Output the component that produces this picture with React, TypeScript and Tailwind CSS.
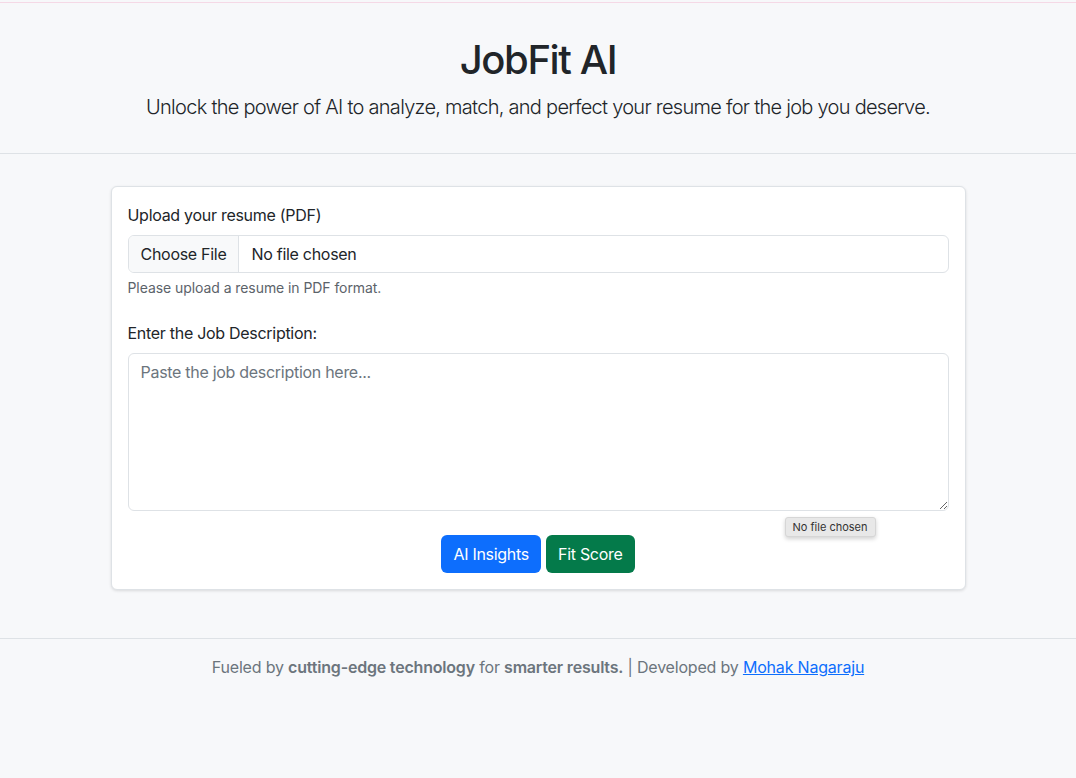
export default function App() {
  return (
    <div
      className="min-h-screen bg-[#f7f8fa] text-[#212529] tracking-[-0.018em]"
      style={{ fontFamily: 'Inter, "Noto Sans", sans-serif' }}
    >
      <div className="h-[2px]" />
      <div className="h-px bg-[#f5d9e6]" />
      <header className="border-b border-[#dee2e6] pt-[33px] pb-[31px] text-center">
        <h1 className="mb-2 text-[40px] leading-[48px] font-medium tracking-[-0.035em]">JobFit AI</h1>
        <p className="text-[20px] leading-[30px] font-light tracking-[-0.036em]">
          Unlock the power of AI to analyze, match, and perfect your resume for the job you deserve.
        </p>
      </header>

      <main className="pt-8 pb-12">
        <div className="relative mx-auto w-[855px] rounded-md border border-[#dee2e6] bg-white p-4 shadow-[0_1px_3px_rgba(0,0,0,0.12)]">
          <label className="mb-2 block text-[16px] leading-6">Upload your resume (PDF)</label>
          <div className="flex h-[38px] items-stretch overflow-hidden rounded-md border border-[#dee2e6] text-[16px]">
            <span className="flex items-center border-r border-[#dee2e6] bg-[#f8f9fa] px-3">Choose File</span>
            <span className="flex items-center px-3">No file chosen</span>
          </div>
          <p className="mt-1 mb-[23px] text-[14px] leading-[21px] text-[#5c636a] tracking-[-0.005em]">
            Please upload a resume in PDF format.
          </p>

          <label className="mb-2 block text-[16px] leading-6">Enter the Job Description:</label>
          <textarea
            className="block h-[158px] w-full rounded-md border border-[#dee2e6] px-3 py-[6px] text-[16px] leading-6 placeholder:text-[#6c757d] focus:outline-none"
            placeholder="Paste the job description here..."
          />

          <div className="mt-6 flex justify-center gap-[5px]">
            <button className="h-[38px] rounded-md bg-[#0d6efd] px-3 text-[16px] text-white">AI Insights</button>
            <button className="h-[38px] rounded-md bg-[#047a4a] px-3 text-[16px] text-white">Fit Score</button>
          </div>

          <div className="absolute top-[330px] left-[673px] rounded-[3px] border border-[#d6d6d6] bg-[#e8e8e8] px-[7px] py-[2px] text-[11px] leading-[14px] tracking-normal text-[#333] shadow-[0_2px_4px_rgba(0,0,0,0.18)]">
            No file chosen
          </div>
        </div>
      </main>

      <footer className="border-t border-[#dee2e6] pt-4 text-center text-[16px] leading-6 text-[#6c757d] tracking-[-0.012em]">
        Fueled by <strong className="font-semibold">cutting-edge technology</strong> for{' '}
        <strong className="font-semibold">smarter results.</strong> | Developed by{' '}
        <a href="#" className="text-[#0d6efd] underline">
          Mohak Nagaraju
        </a>
      </footer>
    </div>
  )
}
